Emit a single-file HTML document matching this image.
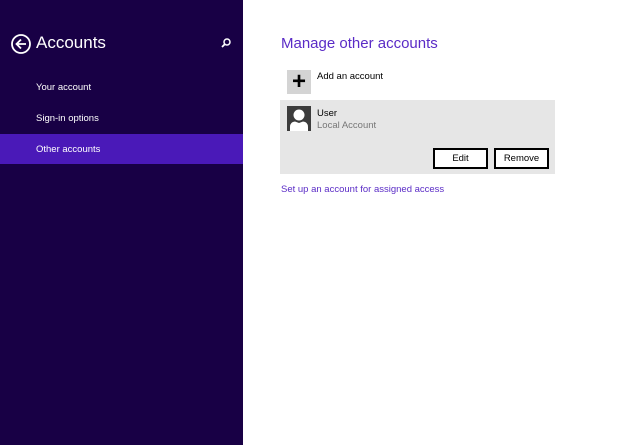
<!DOCTYPE html>
<html><head><style>
body{margin:0;width:624px;height:445px;overflow:hidden;font-family:"Liberation Sans",sans-serif;background:#fff;position:relative}
.l{position:absolute;left:0;top:0;width:243px;height:445px;background:#180045}
.t{position:absolute;color:#fff;font-size:9.5px}
.sel{position:absolute;left:0;top:134px;width:243px;height:30px;background:#4a19b8}
.btn{position:absolute;top:148px;height:17px;border:2px solid #000;background:#fff;font-size:9.5px;text-align:center;line-height:17px;box-sizing:content-box}
</style></head><body>
<div class="l"></div>
<div class="sel"></div>
<svg style="position:absolute;left:10px;top:33px" width="22" height="22" viewBox="0 0 22 22"><circle cx="11" cy="11" r="9" fill="none" stroke="#fff" stroke-width="1.8"/><path d="M16 11H7M11 6.5L6.5 11L11 15.5" fill="none" stroke="#fff" stroke-width="1.8"/></svg>
<div class="t" style="left:36px;top:33px;font-size:17px">Accounts</div>
<svg style="position:absolute;left:220px;top:37px" width="12" height="12" viewBox="0 0 12 12"><circle cx="7" cy="5" r="3" fill="none" stroke="#fff" stroke-width="1.5"/><path d="M5 7L2 10" stroke="#fff" stroke-width="1.8"/></svg>
<div class="t" style="left:36px;top:82px">Your account</div>
<div class="t" style="left:36px;top:113px">Sign-in options</div>
<div class="t" style="left:36px;top:144px">Other accounts</div>
<div style="position:absolute;left:281px;top:35px;font-size:15px;color:#5a2bc6">Manage other accounts</div>
<div style="position:absolute;left:287px;top:70px;width:24px;height:24px;background:#d4d4d4;font-size:24px;font-weight:bold;line-height:24px;text-align:center;color:#000">+</div>
<div style="position:absolute;left:317px;top:71px;font-size:9.5px">Add an account</div>
<div style="position:absolute;left:280px;top:100px;width:275px;height:74px;background:#e6e6e6"></div>
<svg style="position:absolute;left:287px;top:106px" width="24" height="25" viewBox="0 0 24 25"><rect width="24" height="25" fill="#3c3c3c"/><circle cx="12" cy="9" r="5.5" fill="#fff"/><path d="M3 25V21Q3 16 8 15.5L12 17L16 15.5Q21 16 21 21V25Z" fill="#fff"/></svg>
<div style="position:absolute;left:317px;top:108px;font-size:9.5px">User</div>
<div style="position:absolute;left:317px;top:120px;font-size:9.5px;color:#777">Local Account</div>
<div class="btn" style="left:433px;width:51px">Edit</div>
<div class="btn" style="left:494px;width:51px">Remove</div>
<div style="position:absolute;left:281px;top:184px;font-size:9.5px;color:#5a2bc6">Set up an account for assigned access</div>
</body></html>
